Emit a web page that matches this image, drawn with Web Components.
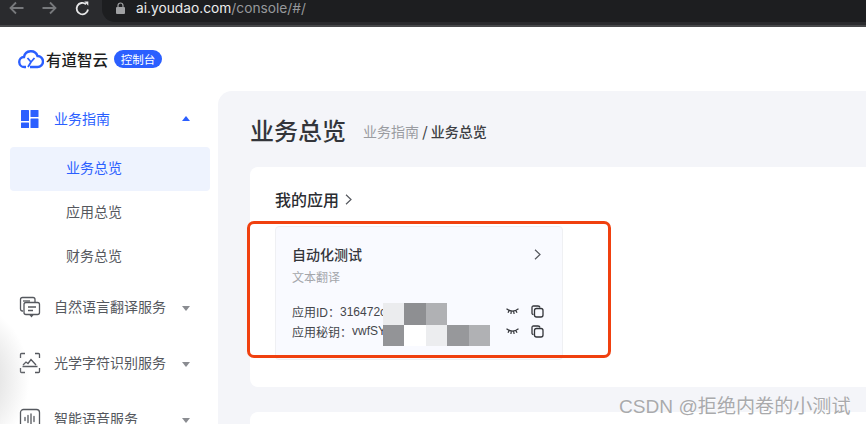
<!DOCTYPE html>
<html lang="zh">
<head>
<meta charset="utf-8">
<title>业务总览</title>
<style>
  html, body { margin: 0; height: 424px; overflow: hidden; background: #fff; }
  body { font-family: "Inter", "Noto Sans CJK SC", sans-serif; display: flex; flex-direction: column; position: relative; }
  .shell { display: flex; flex: 1; min-height: 0; }
</style>
</head>
<body>
<browser-bar></browser-bar>
<div class="shell">
  <side-nav>
    <nav-group label="业务指南" active open>
      <svg slot="icon" width="20" height="20" viewBox="0 0 20 20" fill="#2b5fff"><rect x="1" y="1" width="8" height="11" rx=".5"/><rect x="10.500" y="1" width="8" height="7" rx=".5"/><rect x="1" y="13.500" width="8" height="5.500" rx=".5"/><rect x="10.500" y="9.500" width="8" height="9.500" rx=".5"/></svg>
      <nav-item active>业务总览</nav-item>
      <nav-item>应用总览</nav-item>
      <nav-item>财务总览</nav-item>
    </nav-group>
    <nav-group label="自然语言翻译服务">
      <svg slot="icon" width="22" height="22" viewBox="0 0 22 22" fill="none" stroke="#55585e" stroke-width="1.300"><path d="M4 15H3.500Q1.500 15 1.500 13V3.500Q1.500 1.500 3.500 1.500H14Q16 1.500 16 3.500V6"/><path d="M4 5h7"/><rect x="5" y="6.500" width="15.500" height="12" rx="2"/><path d="M11 18.500l1.500 2 1.500-2M9 11h8M9 14.500h5"/></svg>
    </nav-group>
    <nav-group label="光学字符识别服务">
      <svg slot="icon" width="22" height="22" viewBox="0 0 22 22" fill="none" stroke="#55585e" stroke-width="1.300"><path d="M1.500 6V2.500Q1.500 1.500 2.500 1.500H6M16 1.500h3.500Q20.500 1.500 20.500 2.500V6M1.500 16v3.500Q1.500 20.500 2.500 20.500H6M16 20.500h3.500Q20.500 20.500 20.500 19.500V16"/><path d="M4 13l3-3 2 1.500 3-4 5 5.500M3.500 14.500h15"/></svg>
    </nav-group>
    <nav-group label="智能语音服务">
      <svg slot="icon" width="22" height="22" viewBox="0 0 22 22" fill="none" stroke="#55585e" stroke-width="1.300"><rect x="1.500" y="1.500" width="19" height="19" rx="3"/><path d="M6 9.500v3M9 7.500v7M12 6v10M15 8.500v5" stroke-linecap="round"/></svg>
    </nav-group>
  </side-nav>
  <main-area>
    <page-head title="业务总览" parent="业务指南" current="业务总览"></page-head>
    <panel-card heading="我的应用">
      <app-card name="自动化测试" kind="文本翻译" app-id="316472c" app-secret="vwfSY"></app-card>
    </panel-card>
    <panel-card class="next"></panel-card>
  </main-area>
</div>
<focus-ring></focus-ring>
<water-mark>CSDN @拒绝内卷的小测试</water-mark>

<script>
class BrowserBar extends HTMLElement {
  constructor() {
    super();
    this.attachShadow({ mode: 'open' }).innerHTML = `
      <style>
        :host { display: flex; align-items: flex-start; height: 25px; background: #2a2b2e; border-bottom: 2px solid #47484a; flex: none; padding-left: 9px; overflow: hidden; }
        svg { flex: none; display: block; }
        .nav { display: flex; align-items: center; gap: 18px; height: 16px; }
        .url { display: flex; align-items: center; margin-left: 12px; height: 22px; padding: 0 0 6px 14px; box-sizing: border-box; width: 764px; background: #1d1e20; border-radius: 0 0 0 13px; font: 13.750px "Inter", sans-serif; color: #eceded; }
        .url svg { margin: 0 11px 0 0; }
        .url span { color: #96989b; }
      </style>
      <div class="nav">
        <svg width="15" height="14" viewBox="0 0 15 14" fill="none" stroke="#77797c" stroke-width="1.800"><path d="M14.500 7H1.500M7 1.500L1.500 7 7 12.500"/></svg>
        <svg width="15" height="14" viewBox="0 0 15 14" fill="none" stroke="#77797c" stroke-width="1.800"><path d="M.5 7h13M8 1.500L13.500 7 8 12.500"/></svg>
        <svg width="15" height="15" viewBox="0 0 15 15" fill="none" stroke="#e8e8e9" stroke-width="1.800"><path d="M13 8.500A5.700 5.700 0 1 1 11 3.200"/><path d="M9.300 .5h4v4.300z" fill="#e8e8e9" stroke="none"/></svg>
      </div>
      <div class="url">
        <svg width="9" height="12" viewBox="0 0 9 12"><path d="M2 5V3.500a2.500 2.500 0 0 1 5 0V5" fill="none" stroke="#a0a1a3" stroke-width="1.200"/><rect y="5" width="9" height="7" rx="1" fill="#a0a1a3"/></svg>
        ai.youdao.com<span>/console/#/</span>
      </div>`;
  }
}

class SideNav extends HTMLElement {
  constructor() {
    super();
    this.attachShadow({ mode: 'open' }).innerHTML = `
      <style>
        :host { display: flex; flex-direction: column; width: 218px; flex: none; position: relative; overflow: hidden; }
        .brand { display: flex; align-items: center; height: 64px; padding-left: 18px; flex: none; }
        .name { font: 500 15.500px "Noto Sans CJK SC", sans-serif; color: #1c1d20; margin-left: 2px; }
        .tag { margin-left: 6px; background: #2b5fff; color: #fff; font: 11.500px "Noto Sans CJK SC", sans-serif; width: 48px; height: 18px; line-height: 18px; text-align: center; border-radius: 9px; }
        .fade { position: absolute; left: -30px; bottom: -30px; width: 60px; height: 150px; background: radial-gradient(ellipse at left center, #d0d0d0, rgba(255,255,255,0) 70%); pointer-events: none; }
      </style>
      <div class="brand">
        <svg width="26" height="20" viewBox="0 0 26 20" fill="none" stroke="#2b5fff" stroke-width="2.400"><path d="M8 18H6.500a5 5 0 0 1-.5-10A7 7 0 0 1 19.500 7a5.500 5.500 0 0 1 0 11H12"/><path d="M9.500 9l3.500 4 3.500-4M13 13l-3 5" stroke-width="1.800"/></svg>
        <span class="name">有道智云</span>
        <span class="tag">控制台</span>
      </div>
      <slot></slot>
      <div class="fade"></div>`;
  }
}

class NavGroup extends HTMLElement {
  constructor() {
    super();
    this.attachShadow({ mode: 'open' }).innerHTML = `
      <style>
        :host { display: block; }
        .row { display: flex; align-items: center; height: 56px; padding-left: 19px; font: 14px "Noto Sans CJK SC", sans-serif; color: #55585e; }
        :host([active]) .row { color: #2b5fff; }
        .icon { width: 22px; display: flex; justify-content: center; flex: none; }
        .label { margin-left: 13px; flex: 1; padding-bottom: 2px; }
        .caret { width: 0; height: 0; border: 4px solid transparent; border-top: 5px solid #8a8c91; border-bottom: 0; margin-right: 28px; margin-top: 2px; }
        :host([open]) .caret { border-top: 0; border-bottom: 5px solid #2b5fff; margin-top: -2px; }
      </style>
      <div class="row">
        <span class="icon"><slot name="icon"></slot></span>
        <span class="label"></span>
        <span class="caret"></span>
      </div>
      <div class="kids"><slot></slot></div>`;
  }
  connectedCallback() {
    this.shadowRoot.querySelector('.label').textContent = this.getAttribute('label');
  }
}

class NavItem extends HTMLElement {
  constructor() {
    super();
    this.attachShadow({ mode: 'open' }).innerHTML = `
      <style>
        :host { display: flex; align-items: center; height: 44px; margin: 0 8px 0 10px; padding: 0 0 4px 56px; box-sizing: border-box; border-radius: 4px; font: 14px "Noto Sans CJK SC", sans-serif; color: #55585e; }
        :host([active]) { background: #eef3fe; color: #2b5fff; }
      </style>
      <slot></slot>`;
  }
}

class MainArea extends HTMLElement {
  constructor() {
    super();
    this.attachShadow({ mode: 'open' }).innerHTML = `
      <style>
        :host { display: flex; flex-direction: column; flex: 1; min-width: 0; margin-top: 64px; background: #f4f5f9; border-radius: 14px 0 0 0; padding-left: 32px; overflow: hidden; }
      </style>
      <slot></slot>`;
  }
}

class PageHead extends HTMLElement {
  constructor() {
    super();
    this.attachShadow({ mode: 'open' }).innerHTML = `
      <style>
        :host { display: flex; align-items: center; height: 76px; flex: none; font-family: "Noto Sans CJK SC", sans-serif; }
        h1 { margin: 0 17px 0 0; font-size: 24px; font-weight: 500; color: #33353a; }
        .crumb { font-size: 14px; color: #9a9ca1; padding-top: 4px; }
        .crumb b { font-weight: 500; color: #3c3e43; }
      </style>
      <h1></h1>
      <div class="crumb"><span class="p"></span> <b>/ <span class="c"></span></b></div>`;
  }
  connectedCallback() {
    this.shadowRoot.querySelector('h1').textContent = this.getAttribute('title');
    this.shadowRoot.querySelector('.p').textContent = this.getAttribute('parent');
    this.shadowRoot.querySelector('.c').textContent = this.getAttribute('current');
  }
}

class PanelCard extends HTMLElement {
  constructor() {
    super();
    this.attachShadow({ mode: 'open' }).innerHTML = `
      <style>
        :host { display: block; flex: none; height: 220px; background: #fff; border-radius: 8px 0 0 8px; padding-left: 25px; margin-bottom: 25px; font-family: "Noto Sans CJK SC", sans-serif; box-sizing: border-box; }
        .head { display: flex; align-items: center; height: 59px; gap: 6px; font-size: 16px; font-weight: 500; color: #2b2d32; padding-bottom: 1px; padding-top: 6px; box-sizing: border-box; }
        .head:empty { display: none; }
      </style>
      <div class="head"></div>
      <slot></slot>`;
  }
  connectedCallback() {
    const heading = this.getAttribute('heading');
    if (heading) {
      this.shadowRoot.querySelector('.head').innerHTML = `<span>${heading}</span>
        <svg width="7" height="11" viewBox="0 0 7 11" fill="none" stroke="#55585e" stroke-width="1.200"><path d="M1 .8l5 4.700-5 4.700"/></svg>`;
    }
  }
}

class AppCard extends HTMLElement {
  constructor() {
    super();
    const eye = `<svg width="13" height="7" viewBox="0 0 13 7" fill="none" stroke="#33353a" stroke-width="1.200"><path d="M.5 .8Q6.500 5.500 12.500 .8M3 2.800L2 4.800M5.300 3.500l-.4 2.500M7.700 3.500l.4 2.500M10 2.800l1 2"/></svg>`;
    const copy = `<svg width="13" height="13" viewBox="0 0 13 13" fill="none" stroke="#33353a" stroke-width="1.300"><path d="M2.500 9.500Q1 9.500 1 8V2.500Q1 1 2.500 1H7Q8.700 1 9 2.500"/><rect x="3.500" y="3.500" width="8.500" height="8.500" rx="2"/></svg>`;
    this.attachShadow({ mode: 'open' }).innerHTML = `
      <style>
        :host { display: flex; flex-direction: column; width: 288px; height: 134px; box-sizing: border-box; background: #f9faff; border: 1px solid #eff0f3; border-radius: 4px; padding: 15px 16px 0; position: relative; font-family: "Noto Sans CJK SC", sans-serif; }
        .top { display: flex; justify-content: space-between; align-items: center; padding-right: 5px; font-size: 14px; font-weight: 500; color: #33353a; height: 24px; }
        .kind { font-size: 12px; color: #a4a6ab; height: 20px; line-height: 20px; margin-top: 1px; }
        .rows { margin-top: 15px; font: 12px "Liberation Sans", "Noto Sans CJK SC", sans-serif; color: #44464b; }
        .line { display: flex; align-items: center; height: 19.500px; }
        .line .v { flex: 1; }
        .tools { display: flex; align-items: center; gap: 12px; margin-right: 2px; }
        svg { display: block; }
        .mosaic { position: absolute; left: 107px; top: 76px; display: grid; grid-template-columns: repeat(5, 21.400px); grid-auto-rows: 21.500px; }
      </style>
      <div class="top"><span class="name"></span>
        <svg width="7" height="11" viewBox="0 0 7 11" fill="none" stroke="#55585e" stroke-width="1.200"><path d="M1 .8l5 4.700-5 4.700"/></svg></div>
      <div class="kind"></div>
      <div class="rows">
        <div class="line"><span>应用ID：</span><span class="v id"></span><span class="tools">${eye}${copy}</span></div>
        <div class="line"><span>应用秘钥：</span><span class="v secret"></span><span class="tools">${eye}${copy}</span></div>
      </div>
      <div class="mosaic">
        <i style="background:#ebecee"></i><i style="background:#8e8f92"></i><i style="background:#b0b1b4"></i><i></i><i></i>
        <i style="background:#939497"></i><i style="background:#fff"></i><i style="background:#ecedef"></i><i style="background:#97989b"></i><i style="background:#b0b1b4"></i>
      </div>`;
  }
  connectedCallback() {
    const root = this.shadowRoot;
    root.querySelector('.name').textContent = this.getAttribute('name');
    root.querySelector('.kind').textContent = this.getAttribute('kind');
    root.querySelector('.id').textContent = this.getAttribute('app-id');
    root.querySelector('.secret').textContent = this.getAttribute('app-secret');
  }
}

// the hand drawn red box from the screenshot, lies over the card
class FocusRing extends HTMLElement {
  constructor() {
    super();
    this.attachShadow({ mode: 'open' }).innerHTML = `
      <style>
        :host { position: absolute; left: 247px; top: 221px; width: 364px; height: 137px; box-sizing: border-box; border: 3px solid #f0400f; border-radius: 7px; pointer-events: none; }
      </style>`;
  }
}

class WaterMark extends HTMLElement {
  constructor() {
    super();
    this.attachShadow({ mode: 'open' }).innerHTML = `
      <style>
        :host { position: absolute; left: 619px; top: 391px; font: 19.100px "Liberation Sans", "Noto Sans CJK SC", sans-serif; color: #a9aaac; text-shadow: 0 1px 1px #fff; white-space: nowrap; }
      </style>
      <slot></slot>`;
  }
}

customElements.define('browser-bar', BrowserBar);
customElements.define('side-nav', SideNav);
customElements.define('nav-group', NavGroup);
customElements.define('nav-item', NavItem);
customElements.define('main-area', MainArea);
customElements.define('page-head', PageHead);
customElements.define('panel-card', PanelCard);
customElements.define('app-card', AppCard);
customElements.define('focus-ring', FocusRing);
customElements.define('water-mark', WaterMark);
</script>
</body>
</html>
